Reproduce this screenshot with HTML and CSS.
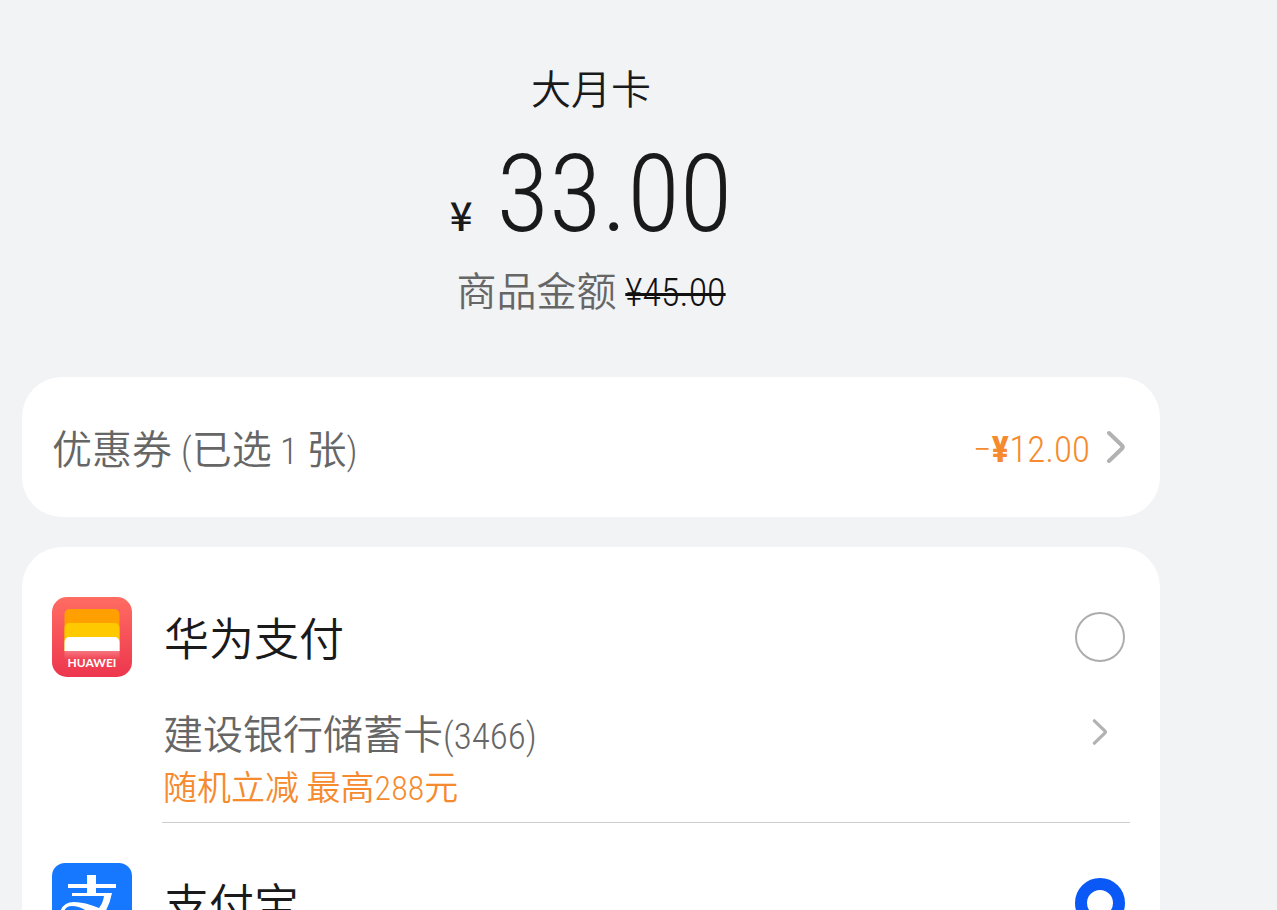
FILE: index.html
```html
<!DOCTYPE html>
<html lang="zh-CN">
<head>
<meta charset="utf-8">
<meta name="viewport" content="width=device-width, initial-scale=1">
<title>支付</title>
<link rel="stylesheet" href="styles.css">
</head>
<body>
<main class="page">
  <header class="summary">
    <h1 class="product">大月卡</h1>
    <p class="price"><span class="currency">¥</span><span class="amount">33.00</span></p>
    <p class="original">商品金额 <del class="was">¥45.00</del></p>
  </header>

  <button class="card coupon" type="button">
    <span class="coupon-label">优惠券 <span class="digits">(</span>已选<span class="digits"> 1 </span>张<span class="digits">)</span></span>
    <span class="discount">−<b>¥</b>12.00</span>
    <svg class="chevron" viewBox="0 0 20 34" aria-hidden="true"><path d="M3 3 L16 15.500 Q17.500 17 16 18.500 L3 31"/></svg>
  </button>

  <section class="card methods" aria-label="支付方式">
    <div class="method">
      <svg class="logo" viewBox="0 0 80 80" aria-hidden="true">
        <defs>
          <linearGradient id="red" x1="0" y1="0" x2="0" y2="1">
            <stop offset="0" stop-color="#ff6c62"/><stop offset="1" stop-color="#ed364e"/>
          </linearGradient>
          <linearGradient id="glow" x1="0" y1="0" x2="0" y2="1">
            <stop offset="0" stop-color="#fff" stop-opacity=".25"/><stop offset="1" stop-color="#fff" stop-opacity="0"/>
          </linearGradient>
        </defs>
        <rect width="80" height="80" rx="15" fill="url(#red)"/>
        <path d="M12.500 54V17a5 5 0 0 1 5-5h45a5 5 0 0 1 5 5v37z" fill="#ffa000"/>
        <path d="M12.500 54V31a5 5 0 0 1 5-5h45a5 5 0 0 1 5 5v23z" fill="#ffc900"/>
        <path d="M12.500 54V45a5 5 0 0 1 5-5h45a5 5 0 0 1 5 5v9z" fill="#fff"/>
        <rect x="12.500" y="54" width="55" height="9" fill="url(#glow)"/>
        <text class="logo-text" x="40" y="70" text-anchor="middle">HUAWEI</text>
      </svg>
      <label class="method-name" for="huawei">华为支付</label>
      <input class="radio" type="radio" name="pay" id="huawei">
    </div>
    <button class="bank" type="button">
      <span class="bank-text">
        <span class="bank-name">建设银行储蓄卡<span class="digits">(3466)</span></span>
        <span class="promo">随机立减 最高<span class="promo-digits">288</span>元</span>
      </span>
      <svg class="chevron chevron-small" viewBox="0 0 20 34" aria-hidden="true"><path d="M3 3 L16 15.500 Q17.500 17 16 18.500 L3 31"/></svg>
    </button>
    <div class="method">
      <svg class="logo" viewBox="0 0 80 80" aria-hidden="true">
        <rect width="80" height="80" rx="13" fill="#1677ff"/>
        <path fill="#fff" d="M35 12h9v9h20v4H44v5h16q-2 11-8 21q10 4 29 9v10q-20-6-34-13q-10 12-24 12Q7 70 7 58Q7 39 22 39q11 0 25 6q4-5 5-12H20v-3h15v-5H16v-4h19z"/>
        <path fill="#1677ff" d="M39 51q-10-8-19-8-9 0-9 12 0 9 10 9 11 0 18-13z"/>
      </svg>
      <label class="method-name" for="alipay">支付宝</label>
      <input class="radio" type="radio" name="pay" id="alipay" checked>
    </div>
  </section>
</main>
</body>
</html>
```
FILE: styles.css
```css
* {
  box-sizing: border-box;
}

body {
  margin: 0;
  background: #f1f3f5;
  color: #1a1a1a;
  font-family: "Noto Sans CJK SC", sans-serif;
  font-weight: 350;
}

button {
  border: 0;
  background: none;
  color: inherit;
  font: inherit;
  text-align: left;
  cursor: pointer;
}

.page {
  display: flex;
  flex-direction: column;
  gap: 30px;
  height: 100vh;
  padding: 57px 117px 0 22px;
  overflow: hidden;
}

.summary {
  display: flex;
  flex-direction: column;
  align-items: center;
  padding-bottom: 30px;
}

.product,
.price,
.original {
  margin: 0;
  font-weight: inherit;
}

.product {
  font-size: 40px;
  line-height: 60px;
}

.price {
  display: flex;
  align-items: baseline;
  gap: 24px;
  margin-top: 10px;
}

.currency {
  font-size: 40px;
  font-weight: 500;
  line-height: 40px;
}

.amount,
.was,
.discount,
.digits,
.promo-digits {
  font-family: "Roboto Condensed", "Noto Sans CJK SC", sans-serif;
  line-height: 1;
}

.amount {
  font-size: 108px;
  line-height: 134px;
}

.original {
  color: #666;
  font-size: 40px;
  line-height: 56px;
}

.was {
  color: #111;
  font-size: 38px;
  text-decoration-thickness: 3px;
}

.card {
  flex-shrink: 0;
  border-radius: 40px;
  background: #fff;
}

.coupon {
  display: flex;
  align-items: center;
  height: 140px;
  padding: 0 34px 0 30px;
  font-size: 40px;
}

.coupon-label {
  flex: 1;
  color: #666;
}

.digits {
  font-size: 37px;
}

.discount {
  margin-right: 16px;
  padding-top: 5px;
  color: #f58b2e;
  font-size: 37px;
}

.chevron {
  width: 20px;
  height: 34px;
  fill: none;
  stroke: #b2b2b2;
  stroke-width: 4px;
  stroke-linecap: round;
}

.chevron-small {
  width: 16px;
  height: 28px;
}

.methods {
  padding: 50px 30px;
}

.method {
  display: flex;
  align-items: center;
  gap: 32px;
  padding-right: 5px;
}

.logo {
  width: 80px;
  height: 80px;
}

.logo-text {
  fill: #fff;
  font-family: Lato, sans-serif;
  font-size: 12px;
  font-weight: 700;
}

.method-name {
  flex: 1;
  font-size: 45px;
  line-height: 70px;
}

.radio {
  appearance: none;
  width: 50px;
  height: 50px;
  margin: 0;
  border: 2px solid #adadad;
  border-radius: 50%;
}

.radio:checked {
  border: 12px solid #0a59f7;
}

.bank {
  display: flex;
  width: calc(100% - 110px);
  margin: 0 0 40px 110px;
  padding: 28px 22px 9px 1px;
  border-bottom: 1px solid #ccc;
}

.bank-text {
  display: flex;
  flex: 1;
  flex-direction: column;
}

.bank-name {
  color: #666;
  font-size: 40px;
  line-height: 54px;
}

.promo {
  color: #f58b2e;
  font-size: 34px;
  line-height: 54px;
}

.bank .chevron {
  margin-top: 13px;
}
```
